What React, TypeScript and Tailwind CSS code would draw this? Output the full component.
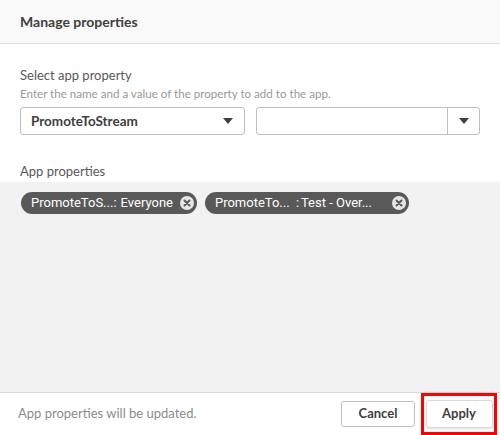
function Caret() {
  return (
    <svg width="10" height="6" viewBox="0 0 10 6" aria-hidden="true">
      <path d="M0 0h10L5 6z" fill="#404040" />
    </svg>
  );
}

function ChipClose() {
  return (
    <svg width="14" height="14" viewBox="0 0 14 14" aria-hidden="true">
      <circle cx="7" cy="7" r="7" fill="#e6e6e6" />
      <path d="M4.5 4.5l5 5M9.5 4.5l-5 5" stroke="#595959" strokeWidth="2" strokeLinecap="round" />
    </svg>
  );
}

interface ChipProps {
  name: string;
  value: string;
  nameWidth?: string;
  valueWidth?: string;
}

function Chip({ name, value, nameWidth = '', valueWidth = '' }: ChipProps) {
  return (
    <div className="flex h-[22px] items-center rounded-full bg-[#595959] pl-[10px] pr-[3px] font-['Roboto',sans-serif] text-[13px] text-white">
      <span className={`whitespace-pre ${nameWidth}`}>{name}</span>
      <span className={`ml-[4px] whitespace-pre ${valueWidth}`}>{value}</span>
      <span className="ml-[7px] flex">
        <ChipClose />
      </span>
    </div>
  );
}

export default function App() {
  return (
    <div className="flex h-[435px] w-[500px] flex-col bg-white font-['Lato',sans-serif] text-[#404040]">
      <header className="flex h-[44px] items-center border-b border-[#d9d9d9] bg-[#f9f9f9] px-[20px]">
        <h1 className="text-[14px] font-bold text-[#404040]">Manage properties</h1>
      </header>

      <div className="px-[20px] pt-[22px]">
        <p className="text-[13px] leading-[18px] text-[#595959]">Select app property</p>
        <p className="mt-[1px] text-[11.6px] leading-[17px] text-[#999]">
          Enter the name and a value of the property to add to the app.
        </p>
        <div className="mt-[5px] flex gap-[11px]">
          <div className="flex h-[28px] w-[225px] items-center justify-between rounded-[3px] border border-[#bfbfbf] pl-[10px] pr-[11px]">
            <span className="text-[13.5px] font-bold text-[#404040]">PromoteToStream</span>
            <Caret />
          </div>
          <div className="flex h-[28px] w-[225px] items-center rounded-[3px] border border-[#bfbfbf]">
            <div className="flex-1" />
            <div className="flex h-full w-[32px] items-center justify-center border-l border-[#bfbfbf]">
              <Caret />
            </div>
          </div>
        </div>
        <p className="mt-[27px] text-[13px] leading-[18px] text-[#595959]">App properties</p>
      </div>

      <div className="mt-[2px] flex flex-1 items-start gap-[8px] bg-[#f2f2f2] px-[21px] pt-[10px]">
        <Chip name="PromoteToS...:" value="Everyone" />
        <Chip name="PromoteTo...  :" value="Test - Over..." nameWidth="w-[82px]" valueWidth="w-[84px]" />
      </div>

      <footer className="flex h-[43px] items-center justify-between border-t border-[#d9d9d9] bg-white pl-[18px] pr-[3px]">
        <span className="text-[13px] text-[#8c8c8c]">App properties will be updated.</span>
        <div className="flex items-center gap-[6px]">
          <button className="h-[26px] w-[74px] rounded-[3px] border border-[#bfbfbf] bg-white text-[13px] font-bold text-[#404040]">
            Cancel
          </button>
          <div className="-mt-[1px] flex h-[42px] w-[76px] items-center justify-center border-[3px] border-[#ff0000]">
            <button className="h-[28px] w-[67px] rounded-[3px] border border-[#d9d9d9] bg-white text-[13px] font-bold text-[#404040] shadow-sm">
              Apply
            </button>
          </div>
        </div>
      </footer>
    </div>
  );
}
